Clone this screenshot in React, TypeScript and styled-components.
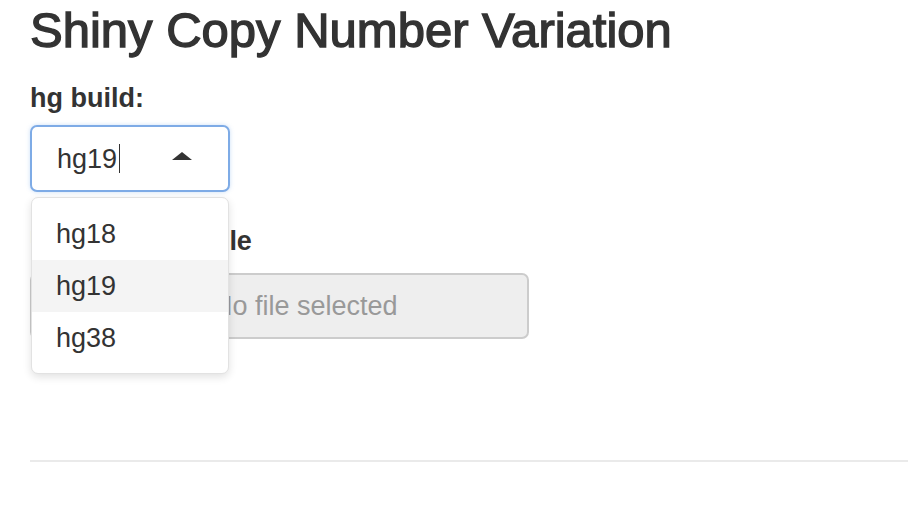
import React from 'react';
import styled, { createGlobalStyle } from 'styled-components';

const GlobalStyle = createGlobalStyle`
  html, body {
    margin: 0;
    padding: 0;
    background: #fff;
    overflow: hidden;
  }
  body {
    font-family: 'Liberation Sans', Arial, Helvetica, sans-serif;
    color: #333;
  }
`;

const Page = styled.div`
  box-sizing: border-box;
  width: 100%;
  min-height: 516px;
  padding: 3px 0 0 30px;
`;

// Helvetica medium look: regular weight plus a thin stroke
const Title = styled.h2`
  margin: 0 0 22px;
  font-size: 49px;
  line-height: 54px;
  font-weight: 400;
  color: #333;
  white-space: nowrap;
  -webkit-text-stroke: 1.4px #333;
`;

const FormGroup = styled.div<{ $gap?: number }>`
  margin-bottom: ${(p) => p.$gap ?? 0}px;
`;

const Label = styled.label<{ $after?: number; $tight?: boolean }>`
  display: block;
  font-size: 27px;
  line-height: 38px;
  font-weight: 700;
  margin-bottom: ${(p) => p.$after ?? 8}px;
  letter-spacing: ${(p) => (p.$tight ? '-0.2px' : 'normal')};
  white-space: nowrap;
`;

const SelectWrap = styled.div`
  position: relative;
  width: 200px;
`;

const SelectBox = styled.div`
  box-sizing: border-box;
  width: 200px;
  height: 67px;
  display: flex;
  align-items: center;
  padding: 0 24px 0 25px;
  border: 2px solid #7eabe6;
  border-radius: 7px;
  background: #fff;
  box-shadow: 0 0 4px rgba(102, 160, 230, 0.35);
`;

const SelectValue = styled.span`
  font-size: 27px;
  line-height: 38px;
  color: #333;
  display: flex;
  align-items: center;
`;

const Cursor = styled.span`
  display: inline-block;
  width: 1px;
  height: 29px;
  margin-left: 2px;
  background: #333;
`;

const Caret = styled.span`
  margin-left: auto;
  margin-right: 12px;
  margin-top: -6px;
  width: 0;
  height: 0;
  border-left: 10px solid transparent;
  border-right: 10px solid transparent;
  border-bottom: 8px solid #333;
`;

const Menu = styled.ul`
  position: absolute;
  z-index: 10;
  top: 72px;
  left: 1px;
  box-sizing: border-box;
  width: 198px;
  margin: 0;
  padding: 10px 0 9px;
  list-style: none;
  background: #fff;
  border: 1px solid #e2e2e2;
  border-radius: 7px;
  box-shadow: 0 3px 8px rgba(0, 0, 0, 0.12);
`;

const Option = styled.li<{ $active?: boolean }>`
  height: 52px;
  line-height: 52px;
  padding-left: 24px;
  font-size: 27px;
  color: #333;
  background: ${(p) => (p.$active ? '#f4f4f4' : 'transparent')};
`;

const InputGroup = styled.div`
  display: flex;
  width: 499px;
  height: 66px;
`;

const BrowseButton = styled.span`
  box-sizing: border-box;
  width: 160px;
  display: flex;
  align-items: center;
  justify-content: center;
  font-size: 27px;
  color: #333;
  background: #fff;
  border: 2px solid #ccc;
  border-right: none;
  border-radius: 7px 0 0 7px;
`;

const FileField = styled.div`
  box-sizing: border-box;
  flex: 1;
  display: flex;
  align-items: center;
  padding-left: 21px;
  font-size: 27px;
  color: #999;
  background: #eee;
  border: 2px solid #ccc;
  border-radius: 0 7px 7px 0;
`;

const Rule = styled.hr`
  margin: 121px 0 0;
  border: none;
  border-top: 2px solid #eaeaea;
`;

const options = ['hg18', 'hg19', 'hg38'];

const App = (): JSX.Element => (
  <Page>
    <GlobalStyle />
    <Title>Shiny Copy Number Variation</Title>
    <FormGroup $gap={30}>
      <Label htmlFor="hg">hg build:</Label>
      <SelectWrap>
        <SelectBox id="hg">
          <SelectValue>
            hg19
            <Cursor />
          </SelectValue>
          <Caret />
        </SelectBox>
        <Menu>
          {options.map((o) => (
            <Option key={o} $active={o === 'hg19'}>
              {o}
            </Option>
          ))}
        </Menu>
      </SelectWrap>
    </FormGroup>
    <FormGroup>
      <Label $after={13} $tight>
        Upload a CNV file
      </Label>
      <InputGroup>
        <BrowseButton>Browse...</BrowseButton>
        <FileField>No file selected</FileField>
      </InputGroup>
    </FormGroup>
    <Rule />
  </Page>
);

export default App;
